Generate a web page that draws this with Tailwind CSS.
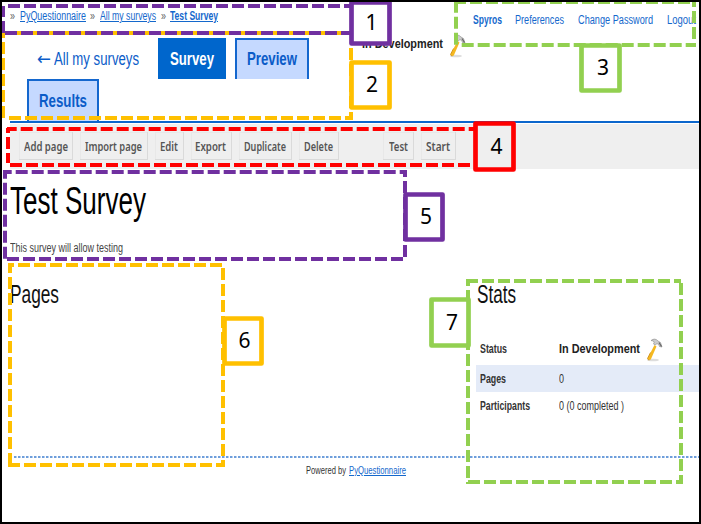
<!DOCTYPE html>
<html lang="en">
<head>
<meta charset="utf-8">
<title>Test Survey</title>
<script src="https://cdn.jsdelivr.net/npm/@tailwindcss/browser@4"></script>
</head>
<body class="bg-white">
<svg class="hidden"><symbol id="hammer" viewBox="0 0 17 24">
  <ellipse cx="7" cy="22" rx="6" ry="1.3" fill="#ddd"/>
  <path d="M8.500 7 L1.500 20.500 Q2.500 22.800 4.800 21.500 L10.500 8.500Z" fill="#f5b820"/>
  <path d="M4.500 14.500 L1.500 20.500 Q2.300 22.300 3.300 22" fill="none" stroke="#c98708" stroke-width=".8"/>
  <path d="M5 2.500 Q9 -.5 12 3 L14.500 4.500 L16 9 L13.500 8.500 L12.500 6 Q10 5 9.500 7 L7.500 6 Q9.500 3 5 2.500Z" fill="#ccc" stroke="#888" stroke-width=".6"/>
  <path d="M13 4.500 L15.500 8.500" stroke="#666" stroke-width="1.200"/>
</symbol></svg>
<div class="relative w-[701px] h-[524px] overflow-hidden border-2 border-black bg-white font-['Liberation_Sans',Arial,sans-serif] text-[#333]">
  <header class="flex h-[119px]">
    <div class="w-[358px] shrink-0">
      <nav class="flex items-center pl-2 pt-1 h-6 text-[12px] leading-5 text-[#1468cc]">
        <span class="w-[9.5px] text-[#666]"><span data-w="5">»</span></span>
        <a class="w-[70.5px] underline underline-offset-1"><span data-w="66">PyQuestionnaire</span></a>
        <span class="w-[9.5px] text-[#666]"><span data-w="5">»</span></span>
        <a class="w-[61px] underline underline-offset-1"><span data-w="56">All my surveys</span></a>
        <span class="w-[9.5px] text-[#666]"><span data-w="5">»</span></span>
        <a class="underline underline-offset-1 font-bold"><span data-w="48">Test Survey</span></a>
      </nav>
      <div class="pt-[12px] pl-[25px] text-[18px] leading-[42px] text-[#0b5cc8]">
        <div class="flex h-[41px]">
          <a class="flex w-[131px] pl-[10px]"><span class="mr-[3px] font-['DejaVu_Sans',sans-serif]" data-w="14">←</span><span data-w="85">All my surveys</span></a>
          <a class="w-[68px] h-[41px] pl-3 bg-[#0066cc] font-bold text-white"><span data-w="44">Survey</span></a>
          <a class="ml-[9px] w-[74px] h-[41px] pl-[10px] border-2 border-b-0 border-[#1467ce] bg-[#c5d9ff] font-bold leading-[39px]"><span data-w="50">Preview</span></a>
        </div>
        <a class="block w-[72px] h-[42px] pl-[10px] border-2 border-b-0 border-[#1467ce] bg-[#c5d9ff] font-bold leading-[41px]"><span data-w="48">Results</span></a>
      </div>
    </div>
    <div class="flex pt-[32px] pl-[2px] w-[113px] shrink-0 text-[13.5px] leading-5 font-bold text-[#222]">
      <span data-w="81">In Development</span>
      <svg class="ml-[6px] w-[17px] h-6"><use href="#hammer"/></svg>
    </div>
    <div class="flex pt-2 text-[12px] leading-5 text-[#1468cc]">
      <a class="w-[42px] font-bold"><span data-w="29">Spyros</span></a>
      <a class="w-[63px]"><span data-w="49">Preferences</span></a>
      <a class="w-[89px]"><span data-w="75">Change Password</span></a>
      <a><span data-w="29">Logout</span></a>
    </div>
  </header>
  <div class="ml-2 h-[2px] bg-[#0b66cc]"></div>
  <div class="flex gap-[7px] ml-2 mt-px h-[45px] pt-2 pl-[9px] bg-[#efefef] font-['Noto_Sans',sans-serif] text-[12.5px] leading-[28px] font-semibold text-[#555]">
    <button class="h-7 w-[54px] border-b border-r border-[#dadada] shadow-[inset_1px_1px_0_#e8e8e8] flex items-center justify-center pt-[2px] pl-[2px]"><span data-w="44">Add page</span></button>
    <button class="h-7 w-[68px] border-b border-r border-[#dadada] shadow-[inset_1px_1px_0_#e8e8e8] flex items-center justify-center pt-[2px] pl-px"><span data-w="57">Import page</span></button>
    <button class="h-7 w-[29px] border-b border-r border-[#dadada] shadow-[inset_1px_1px_0_#e8e8e8] flex items-center justify-center pt-[2px]"><span data-w="18">Edit</span></button>
    <button class="h-7 w-[41px] border-b border-r border-[#dadada] shadow-[inset_1px_1px_0_#e8e8e8] flex items-center justify-center pt-[2px]"><span data-w="31">Export</span></button>
    <button class="h-7 w-[53px] border-b border-r border-[#dadada] shadow-[inset_1px_1px_0_#e8e8e8] flex items-center justify-center pt-[2px]"><span data-w="42">Duplicate</span></button>
    <button class="h-7 w-[40px] border-b border-r border-[#dadada] shadow-[inset_1px_1px_0_#e8e8e8] flex items-center justify-center pt-[2px]"><span data-w="29">Delete</span></button>
    <button class="ml-[37px] h-7 w-[31px] border-b border-r border-[#dadada] shadow-[inset_1px_1px_0_#e8e8e8] flex items-center justify-center pt-[2px]"><span data-w="19">Test</span></button>
    <button class="h-7 w-[35px] border-b border-r border-[#dadada] shadow-[inset_1px_1px_0_#e8e8e8] flex items-center justify-center pt-[2px]"><span data-w="24">Start</span></button>
  </div>
  <main class="pl-2 pt-[12px]">
    <h1 class="h-[40px] text-[38px] leading-[41px] text-black"><span data-w="136">Test Survey</span></h1>
    <p class="mt-[17px] h-5 text-[12.5px] leading-5 text-[#444]"><span data-w="113">This survey will allow testing</span></p>
    <div class="flex h-[198px] pt-[21px]">
      <h2 class="w-[466px] text-[25px] leading-[30px] text-[#111]"><span data-w="49">Pages</span></h2>
      <section class="flex-1">
        <h2 class="pl-px text-[25px] leading-[30px] text-[#111]"><span data-w="39">Stats</span></h2>
        <dl class="mt-[24px] text-[12.5px] text-[#333]">
          <div class="flex h-[32px] pl-[4px] leading-[33px]"><dt class="w-[79px] font-bold"><span data-w="27">Status</span></dt><dd class="flex text-[13.5px] font-bold text-[#222] leading-[32px]"><span data-w="81">In Development</span><svg class="ml-[6px] mt-[5px] w-[17px] h-6"><use href="#hammer"/></svg></dd></div>
          <div class="flex h-[27px] pl-[4px] leading-[28px] bg-[#e4ebf8]"><dt class="w-[79px] font-bold"><span data-w="26">Pages</span></dt><dd><span data-w="5">0</span></dd></div>
          <div class="flex h-[27px] pl-[4px] leading-[28px]"><dt class="w-[79px] font-bold"><span data-w="50">Participants</span></dt><dd><span data-w="65">0 (0 completed )</span></dd></div>
        </dl>
      </section>
    </div>
  </main>
  <footer class="pl-3">
    <svg class="block w-full h-[2px]"><path d="M0 1H690" stroke="#3f7fd0" stroke-width="1.500" stroke-dasharray="2.500 1.500"/></svg>
    <div class="flex gap-[3px] pl-[292px] pt-[2px] text-[11px] leading-5"><span data-w="40">Powered by</span><a class="text-[#1468cc] underline underline-offset-1"><span data-w="57">PyQuestionnaire</span></a></div>
  </footer>

  <!-- numbered callouts over the page -->
  <svg class="absolute -left-[2px] -top-[2px] w-[701px] h-[524px]" viewBox="0 0 701 524" fill="none" stroke-width="4">
    <g stroke="#ffc000" stroke-dasharray="12 4">
      <path d="M3 33V118" stroke-dashoffset="7"/><path d="M351 48V118"/><path d="M9 118H353"/><path d="M5 33H351" stroke-dasharray="none"/>
      <path d="M8 265H223" stroke-dashoffset="6"/><path d="M223 268V467"/><path d="M10 263V467" stroke-dashoffset="2"/><path d="M8 465H225"/>
    </g>
    <g stroke="#7030a0" stroke-dasharray="12 4">
      <path d="M8 6H351"/><path d="M3 6V17"/><path d="M3 21V33"/><path d="M5 33H351"/>
      <path d="M3 172H407" stroke-dashoffset="3.300"/><path d="M405 170V260" stroke-dashoffset="5"/>
      <path d="M5 170V259" stroke-dashoffset="3.300"/><path d="M7 259H405"/>
    </g>
    <g stroke="#92d050" stroke-dasharray="12 4">
      <path d="M454 2H696"/><path d="M694 0V45" stroke-dashoffset="5"/><path d="M456 .7V47"/><path d="M461.700 45H696"/>
      <path d="M466 281H681"/><path d="M681 283V484"/><path d="M468 279V484" stroke-dashoffset="5"/><path d="M468 482H683"/>
    </g>
    <g stroke="#f00" stroke-dasharray="12 4">
      <path d="M7 129H474" stroke-dashoffset="2.300"/><path d="M8 128V163" stroke-dashoffset="7"/><path d="M10 165H474"/>
    </g>
    <g stroke-width="4.700" stroke-linejoin="round">
      <rect x="351.500" y="2.500" width="38" height="41" fill="#fff" stroke="#7030a0"/>
      <rect x="351.500" y="62.500" width="38" height="45" fill="#fff" stroke="#ffc000"/>
      <rect x="581.500" y="45.500" width="38" height="45" fill="#fff" stroke="#92d050"/>
      <rect x="475.500" y="123.500" width="38" height="46" fill="#efefef" stroke="#f00"/>
      <rect x="405.500" y="194.500" width="37" height="45" fill="#fff" stroke="#7030a0"/>
      <rect x="224.500" y="318.500" width="37" height="45" fill="#fff" stroke="#ffc000"/>
      <rect x="431.500" y="299.500" width="37" height="46" fill="#fff" stroke="#92d050"/>
    </g>
    <g fill="#000" text-anchor="middle" class="font-['Noto_Sans',sans-serif] text-[21px]">
      <text x="371.500" y="30">1</text><text x="372" y="92">2</text><text x="603" y="74.500">3</text><text x="496.500" y="153.500">4</text><text x="426" y="224">5</text><text x="244.500" y="347.500">6</text><text x="452" y="330">7</text>
    </g>
  </svg>
</div>
<script>
// Condense each label horizontally to its data-w width, again whenever its natural width changes.
var observer = new ResizeObserver(function (entries) {
  entries.forEach(function (e) { fit(e.target); });
});
function fit(el) {
  var n = parseFloat(getComputedStyle(el).width), w = +el.dataset.w;
  var gap = el.classList.contains('mr-[3px]') ? 3 : 0;
  el.style.transform = 'scaleX(' + w / n + ')';
  el.style.marginRight = (w - n + gap) + 'px';
}
document.querySelectorAll('[data-w]').forEach(function (el) {
  el.style.display = 'inline-block';
  el.style.whiteSpace = 'nowrap';
  el.style.flexShrink = '0';
  el.style.textDecoration = 'inherit';
  el.style.transformOrigin = 'left';
  fit(el);
  observer.observe(el);
});
</script>
</body>
</html>
